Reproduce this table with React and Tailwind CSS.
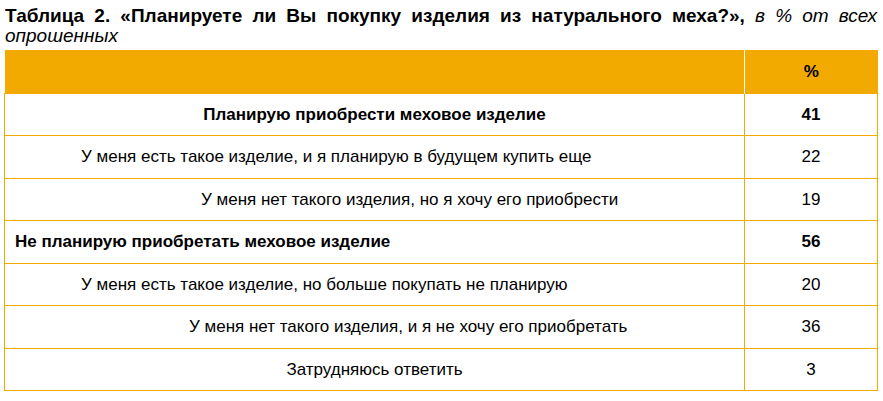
const rows = [
  { label: "Планирую приобрести меховое изделие", value: "41", bold: true, cls: "text-center" },
  { label: "У меня есть такое изделие, и я планирую в будущем купить еще", value: "22", cls: "pl-[76px]" },
  { label: "У меня нет такого изделия, но я хочу его приобрести", value: "19", cls: "pl-[196px]" },
  { label: "Не планирую приобретать меховое изделие", value: "56", bold: true, cls: "pl-[10px]" },
  { label: "У меня есть такое изделие, но больше покупать не планирую", value: "20", cls: "pl-[76px]" },
  { label: "У меня нет такого изделия, и я не хочу его приобретать", value: "36", cls: "pl-[184px]" },
  { label: "Затрудняюсь ответить", value: "3", cls: "text-center" },
];

export default function App() {
  return (
    <div className="w-[883px] h-[401px] bg-white text-black font-['Liberation_Sans',Arial,sans-serif]">
      <p className="pl-[5px] pr-[6px] pt-[6px] text-[19px] leading-[20px] text-justify">
        <b>Таблица 2. «Планируете ли Вы покупку изделия из натурального меха?»,</b>{" "}
        <i>в % от всех опрошенных</i>
      </p>
      <table className="ml-[4px] mt-[4px] w-[874px] border-collapse text-[17px]">
        <thead>
          <tr className="h-[43px] bg-[#f2a900]">
            <th className="border-r border-white"></th>
            <th className="w-[133px] text-center font-bold">%</th>
          </tr>
        </thead>
        <tbody>
          {rows.map((r) => (
            <tr key={r.label} className="h-[42.5px]">
              <td className={`border border-[#f2a900] ${r.cls} ${r.bold ? "font-bold" : ""}`}>{r.label}</td>
              <td className={`border border-[#f2a900] text-center ${r.bold ? "font-bold" : ""}`}>{r.value}</td>
            </tr>
          ))}
        </tbody>
      </table>
    </div>
  );
}
